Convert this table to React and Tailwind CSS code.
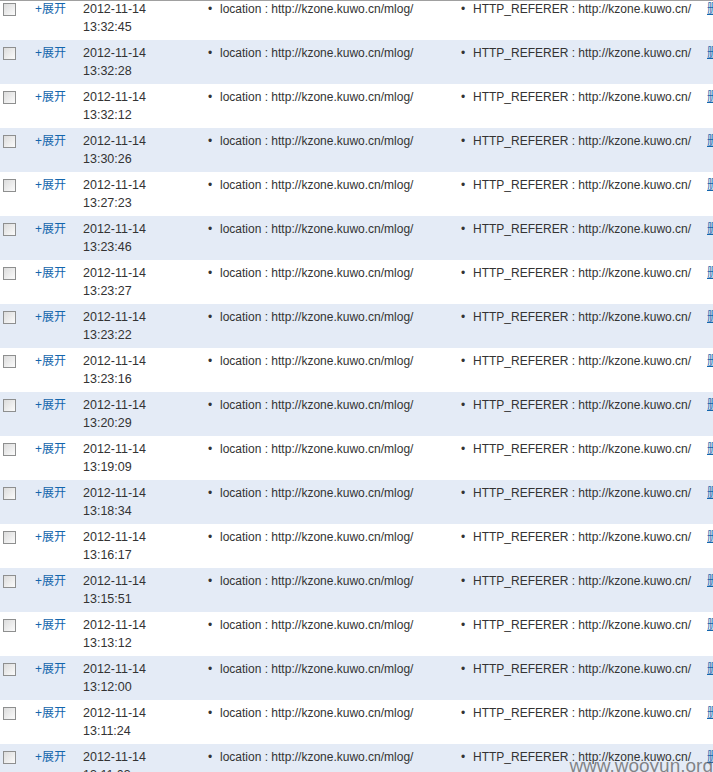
import React from 'react';

const times = [
  '13:32:45', '13:32:28', '13:32:12', '13:30:26', '13:27:23', '13:23:46',
  '13:23:27', '13:23:22', '13:23:16', '13:20:29', '13:19:09', '13:18:34',
  '13:16:17', '13:15:51', '13:13:12', '13:12:00', '13:11:24', '13:11:03',
];

const Checkbox = () => (
  <span className="block w-[13px] h-[13px] border border-[#8e8f8f] bg-gradient-to-br from-[#dcdcdc] to-[#fbfbfb]" />
);

const Row = ({ time, odd }) => (
  <div className={`flex h-[44px] shrink-0 ${odd ? 'bg-[#e4ebf6]' : ''}`}>
    <div className="w-[35px] pl-[3px] pt-[7px] shrink-0">
      <Checkbox />
    </div>
    <div className="w-[48px] pt-[4px] shrink-0 text-[12px]">
      <a className="text-[#1466ac]">+展开</a>
    </div>
    <div className="w-[125px] pt-[4px] shrink-0">
      2012-11-14
      <br />
      {time}
    </div>
    <div className="w-[253px] pt-[4px] shrink-0 flex text-[12px]">
      <span className="w-[12px] shrink-0">•</span>
      <span>location : http://kzone.kuwo.cn/mlog/</span>
    </div>
    <div className="w-[246px] pt-[4px] shrink-0 flex text-[12px]">
      <span className="w-[12px] shrink-0">•</span>
      <span>HTTP_REFERER : http://kzone.kuwo.cn/</span>
    </div>
    <div className="pt-[4px] shrink-0 text-[12px]">
      <a className="text-[#1466ac] underline whitespace-nowrap">删除</a>
    </div>
  </div>
);

export default function App() {
  return (
    <div className="relative w-[713px] h-[772px] overflow-hidden bg-white border-t border-[#a0a0a0] font-['Liberation_Sans','Noto_Sans_CJK_SC',sans-serif] text-[12.5px] leading-[18px] text-[#333]">
      <div className="-mt-[5px] flex flex-col">
        {times.map((t, i) => (
          <Row key={t} time={t} odd={i % 2 === 1} />
        ))}
      </div>
      <div className="absolute right-[0px] bottom-[-3px] text-[19px] text-[#555]/70">
        www.wooyun.org
      </div>
    </div>
  );
}
